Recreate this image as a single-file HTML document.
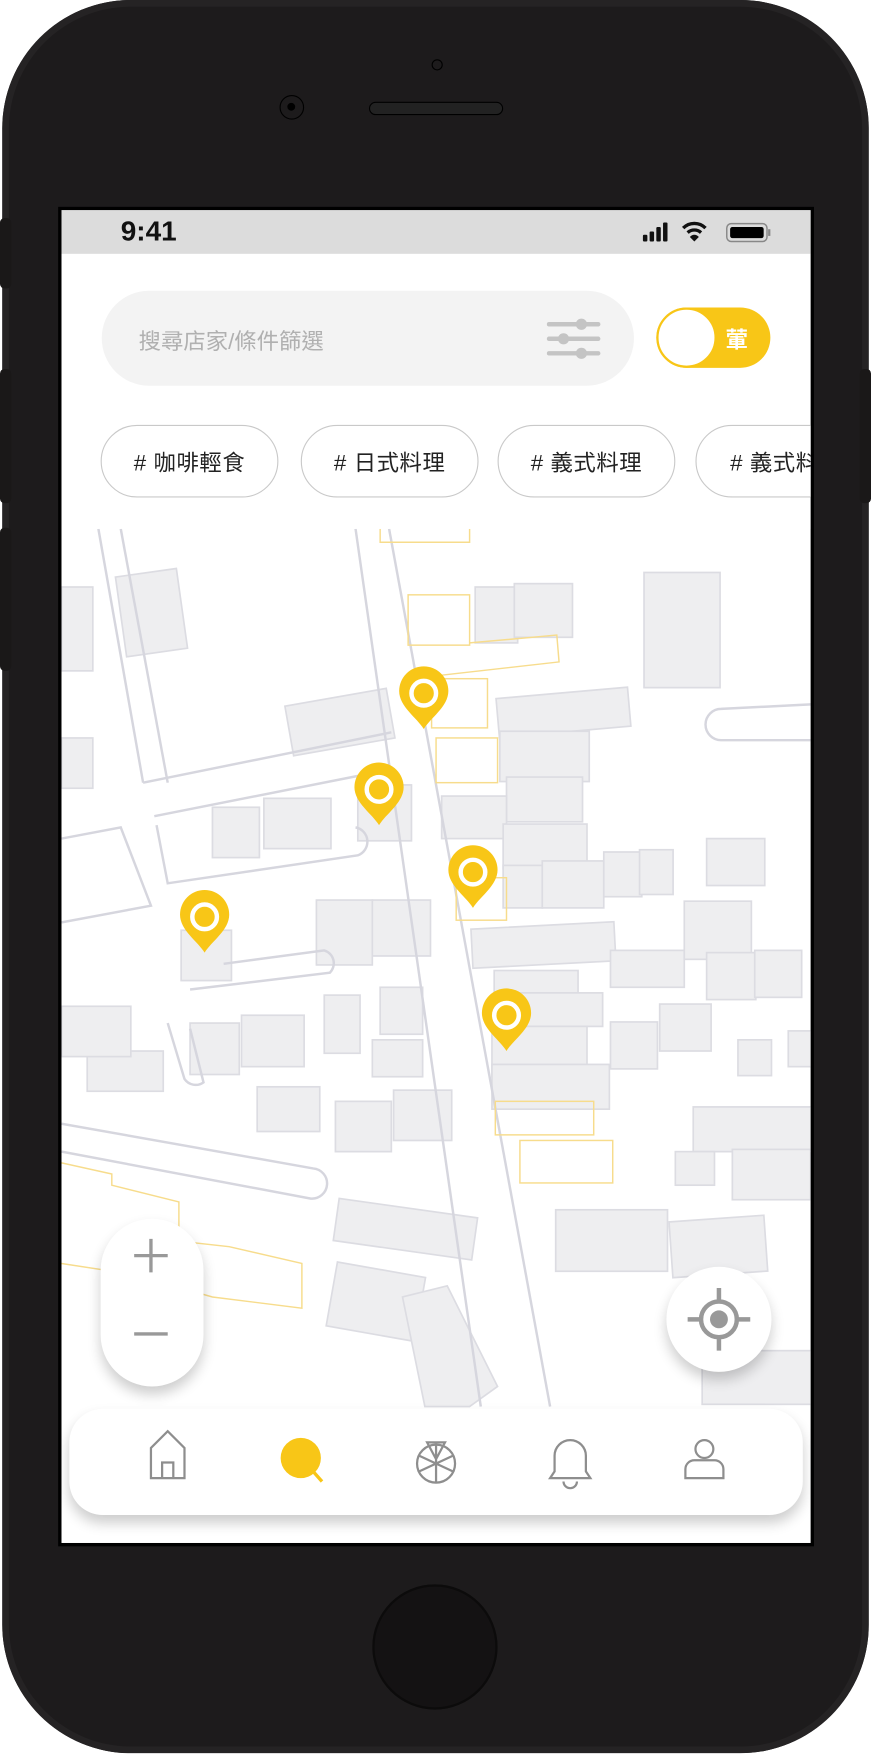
<!DOCTYPE html>
<html><head><meta charset="utf-8"><style>
html,body{margin:0;padding:0;width:871px;height:1754px;overflow:hidden;background:#fff}
#w{position:absolute;left:0;top:0;width:779px;height:1568px;transform:scale(1.1181);transform-origin:0 0;font-family:"Liberation Sans","Noto Sans CJK TC",sans-serif}
.abs{position:absolute}
.phone{left:2px;top:0;width:775px;height:1568px;border-radius:115px;background:#1d1b1c;box-shadow:inset 0 0 0 6px #252324}
.btn{background:#1a1818;border-radius:4px}
.screen{left:52px;top:185px;width:676px;height:1198px;background:#000}
.inner{left:55px;top:188px;width:670px;height:1192px;background:#fff;overflow:hidden}
.status{left:0;top:0;width:670px;height:39px;background:#dcdcdc}
.search{left:36px;top:72px;width:476px;height:85px;border-radius:43px;background:#f3f3f3}
.chip{top:192px;height:65px;width:159px;border:1.5px solid #c9c9c9;border-radius:33px;box-sizing:border-box;font-size:20px;color:#222;display:flex;align-items:center;justify-content:center;background:#fff;letter-spacing:0.5px}
.card{background:#fff;box-shadow:0 7px 12px rgba(0,0,0,.2)}
</style></head><body><div id="w">
<div class="abs phone"></div>
<div class="abs btn" style="left:0;top:195px;width:10px;height:63px"></div>
<div class="abs btn" style="left:0;top:330px;width:10px;height:120px"></div>
<div class="abs btn" style="left:0;top:472px;width:10px;height:128px"></div>
<div class="abs btn" style="left:769px;top:330px;width:10px;height:120px"></div>
<div class="abs" style="left:386px;top:53px;width:8px;height:8px;border-radius:50%;border:1px solid #000"></div>
<div class="abs" style="left:250px;top:85px;width:22px;height:22px;border-radius:50%;border:1.5px solid #000;box-sizing:border-box"><div style="position:absolute;left:6px;top:6px;width:7px;height:7px;border-radius:50%;background:#000"></div></div>
<div class="abs" style="left:330px;top:91px;width:120px;height:12px;border-radius:7px;border:1.5px solid #000;background:#222;box-sizing:border-box"></div>
<div class="abs" style="left:333px;top:1417px;width:112px;height:112px;border-radius:50%;background:#141213;box-shadow:inset 0 0 0 2px #0c0b0b"></div>
<div class="abs screen"></div>
<div class="abs inner">
<svg class="abs" style="left:0;top:0" width="670" height="1192" viewBox="55 188 670 1192">
<g fill="#eeeef0" stroke="#dcdce2" stroke-width="1.5">
<rect x="108" y="512" width="55" height="72" transform="rotate(-8 135 548)"/>
<rect x="258" y="624" width="92" height="45" transform="rotate(-10 300 646)"/>
<rect x="425" y="525" width="38" height="50"/><rect x="460" y="522" width="52" height="48"/>
<rect x="576" y="512" width="68" height="103"/>
<rect x="445" y="620" width="118" height="35" transform="rotate(-5 500 638)"/>
<rect x="447" y="654" width="80" height="45"/><rect x="453" y="695" width="68" height="40"/>
<rect x="395" y="712" width="58" height="38"/>
<rect x="190" y="722" width="42" height="45"/><rect x="236" y="714" width="60" height="45"/><rect x="320" y="702" width="48" height="50"/>
<rect x="450" y="737" width="75" height="40"/><rect x="450" y="774" width="35" height="38"/><rect x="485" y="770" width="55" height="42"/><rect x="540" y="762" width="34" height="40"/><rect x="572" y="760" width="30" height="40"/>
<rect x="632" y="750" width="52" height="42"/>
<rect x="283" y="805" width="50" height="58"/><rect x="333" y="805" width="52" height="50"/><rect x="162" y="832" width="45" height="45"/>
<rect x="422" y="828" width="128" height="35" transform="rotate(-3 480 845)"/>
<rect x="546" y="850" width="66" height="33"/><rect x="612" y="806" width="60" height="52"/><rect x="632" y="852" width="44" height="42"/><rect x="675" y="850" width="42" height="42"/>
<rect x="290" y="890" width="32" height="52"/><rect x="340" y="883" width="38" height="42"/><rect x="333" y="930" width="45" height="33"/>
<rect x="170" y="915" width="44" height="46"/><rect x="216" y="908" width="56" height="46"/><rect x="78" y="940" width="68" height="36"/>
<rect x="442" y="868" width="75" height="30"/><rect x="444" y="888" width="95" height="30"/>
<rect x="440" y="918" width="85" height="45"/><rect x="440" y="952" width="105" height="40"/>
<rect x="546" y="914" width="42" height="42"/><rect x="590" y="898" width="46" height="42"/><rect x="660" y="930" width="30" height="32"/><rect x="705" y="922" width="25" height="32"/>
<rect x="230" y="972" width="56" height="40"/><rect x="300" y="985" width="50" height="45"/><rect x="352" y="975" width="52" height="45"/>
<rect x="620" y="990" width="110" height="40"/><rect x="604" y="1030" width="35" height="30"/><rect x="655" y="1028" width="70" height="45"/>
<rect x="300" y="1080" width="125" height="38" transform="rotate(8 360 1100)"/>
<rect x="497" y="1082" width="100" height="55"/><rect x="600" y="1090" width="85" height="50" transform="rotate(-4 640 1115)"/>
<rect x="296" y="1135" width="80" height="58" transform="rotate(10 335 1165)"/>
<path d="M360 1160 L400 1150 L445 1240 L420 1258 L380 1258 Z"/>
<rect x="628" y="1208" width="100" height="48"/>
<rect x="55" y="525" width="28" height="75"/><rect x="55" y="660" width="28" height="45"/><rect x="55" y="900" width="62" height="45"/>
</g>
<g fill="none" stroke="#d6d6de" stroke-width="2.2">
<path d="M318 473 L430 1258"/><path d="M348 473 L492 1258"/>
<path d="M88 473 L128 700"/><path d="M108 473 L150 700"/>
<path d="M128 700 L350 655"/><path d="M138 730 L340 690"/>
<path d="M140 738 L150 790 L320 765 A13 13 0 0 0 318 740"/>
<path d="M55 750 L108 740 L135 810 L55 825"/>
<path d="M170 885 L295 870 A12 12 0 0 0 290 850 L200 862"/>
<path d="M150 915 L165 965 A12 12 0 0 0 182 968 L170 920"/>
<path d="M55 1005 L280 1045 A12 12 0 0 1 278 1072 L55 1030"/>
<path d="M725 630 L645 634 A14 14 0 0 0 645 662 L725 662"/>
</g>
<g fill="none" stroke="#f7dc8c" stroke-width="1.3">
<path d="M340 473 L340 485 L420 485 L420 473"/>
<rect x="365" y="532" width="55" height="45"/><path d="M420 575 L498 568 L500 592 L385 605"/>
<rect x="386" y="607" width="50" height="44"/><rect x="390" y="660" width="55" height="40"/><rect x="408" y="785" width="45" height="38"/>
<rect x="443" y="985" width="88" height="30"/><rect x="465" y="1020" width="83" height="38"/>
<path d="M55 1040 L100 1050 L100 1060 L160 1075 L160 1110 L205 1115 L270 1130 L270 1170 L190 1160 L120 1140 L55 1130"/>
</g>
<g fill="#f8c617">
<g transform="translate(379 620)"><path d="M0 32 C-6 22 -22 12 -22 -2 A22 22 0 0 1 22 -2 C22 12 6 22 0 32 Z"/><circle r="11" fill="none" stroke="#fff" stroke-width="4"/></g>
<g transform="translate(339 706)"><path d="M0 32 C-6 22 -22 12 -22 -2 A22 22 0 0 1 22 -2 C22 12 6 22 0 32 Z"/><circle r="11" fill="none" stroke="#fff" stroke-width="4"/></g>
<g transform="translate(423 780)"><path d="M0 32 C-6 22 -22 12 -22 -2 A22 22 0 0 1 22 -2 C22 12 6 22 0 32 Z"/><circle r="11" fill="none" stroke="#fff" stroke-width="4"/></g>
<g transform="translate(183 820)"><path d="M0 32 C-6 22 -22 12 -22 -2 A22 22 0 0 1 22 -2 C22 12 6 22 0 32 Z"/><circle r="11" fill="none" stroke="#fff" stroke-width="4"/></g>
<g transform="translate(453 908)"><path d="M0 32 C-6 22 -22 12 -22 -2 A22 22 0 0 1 22 -2 C22 12 6 22 0 32 Z"/><circle r="11" fill="none" stroke="#fff" stroke-width="4"/></g>
</g>
</svg>
<div class="abs" style="left:0;top:0;width:670px;height:285px;background:#fff"></div>
<div class="abs status"></div>
<div class="abs" style="left:53px;top:5px;font-size:25px;font-weight:bold;color:#111">9:41</div>
<svg class="abs" style="left:518px;top:10px" width="125" height="22" viewBox="0 0 125 22">
<rect x="2" y="12" width="4" height="6" rx="1" fill="#111"/><rect x="8" y="9" width="4" height="9" rx="1" fill="#111"/><rect x="14" y="5" width="4" height="13" rx="1" fill="#111"/><rect x="20" y="1" width="4" height="17" rx="1" fill="#111"/>
<path d="M38 6 A14 14 0 0 1 58 6" stroke="#111" stroke-width="3" fill="none"/><path d="M42 10 A9 9 0 0 1 54 10" stroke="#111" stroke-width="3" fill="none"/><path d="M44 14 L48 18 L52 14 A5 5 0 0 0 44 14Z" fill="#111"/>
<rect x="77" y="2" width="36" height="16" rx="4" fill="none" stroke="#888" stroke-width="1.3"/><rect x="80" y="5" width="30" height="10" rx="2" fill="#000"/><rect x="114" y="7" width="2" height="6" fill="#888"/>
</svg>
<div class="abs search"><div class="abs" style="left:33px;top:29px;font-size:20px;color:#b0b0b0">搜尋店家/條件篩選</div>
<svg class="abs" style="left:398px;top:22px" width="50" height="42" viewBox="0 0 50 42"><g stroke="#c4c4c4" stroke-width="4" stroke-linecap="round"><line x1="2" y1="8" x2="46" y2="8"/><line x1="2" y1="21" x2="46" y2="21"/><line x1="2" y1="34" x2="46" y2="34"/></g><g fill="#c4c4c4"><circle cx="31" cy="8" r="5"/><circle cx="15" cy="21" r="5"/><circle cx="31" cy="34" r="5"/></g></svg></div>
<div class="abs" style="left:532px;top:87px;width:102px;height:54px;border-radius:27px;background:#f8c617"></div>
<div class="abs" style="left:532px;top:87px;width:54px;height:54px;border-radius:50%;background:#fff;border:2px solid #f8c617;box-sizing:border-box"></div>
<div class="abs" style="left:594px;top:100px;font-size:20px;font-weight:bold;color:#fff">葷</div>
<div class="abs chip" style="left:35px"># 咖啡輕食</div>
<div class="abs chip" style="left:214px"># 日式料理</div>
<div class="abs chip" style="left:390px"># 義式料理</div>
<div class="abs chip" style="left:567px;justify-content:flex-start;padding-left:30px"># 義式料理</div>
<div class="abs card" style="left:35px;top:902px;width:92px;height:150px;border-radius:46px"></div>
<svg class="abs" style="left:60px;top:915px" width="40" height="120"><g stroke="#999" stroke-width="3"><line x1="20" y1="5" x2="20" y2="35"/><line x1="5" y1="20" x2="35" y2="20"/><line x1="5" y1="90" x2="35" y2="90"/></g></svg>
<div class="abs card" style="left:541px;top:945px;width:94px;height:94px;border-radius:50%"></div>
<svg class="abs" style="left:558px;top:962px" width="60" height="60" viewBox="0 0 60 60"><circle cx="30" cy="30" r="16" fill="none" stroke="#999" stroke-width="4"/><circle cx="30" cy="30" r="8" fill="#999"/><g stroke="#999" stroke-width="4"><line x1="30" y1="2" x2="30" y2="14"/><line x1="30" y1="46" x2="30" y2="58"/><line x1="2" y1="30" x2="14" y2="30"/><line x1="46" y1="30" x2="58" y2="30"/></g></svg>
<div class="abs card" style="left:7px;top:1072px;width:656px;height:95px;border-radius:30px"></div>
<svg class="abs" style="left:7px;top:1072px" width="656" height="95" viewBox="62 1260 656 95" fill="none" stroke="#8e8e8e" stroke-width="2">
<path d="M135 1322 L135 1295 L150 1280 L165 1295 L165 1322 Z M145 1322 L145 1308 L155 1308 L155 1322"/>
<circle cx="269" cy="1304" r="18" fill="#f8c617" stroke="none"/><line x1="280" y1="1316" x2="288" y2="1325" stroke="#f8c617" stroke-width="3"/>
<circle cx="390" cy="1309" r="17"/><path d="M382 1290 L398 1290 L390 1305 Z M390 1292 L390 1326 M375 1302 L405 1316 M375 1316 L405 1302"/>
<path d="M492 1322 L528 1322 L524 1316 L524 1302 A14 14 0 0 0 496 1302 L496 1316 Z M504 1325 A6 6 0 0 0 516 1325"/>
<circle cx="630" cy="1296" r="8"/><path d="M613 1322 L613 1314 A8 8 0 0 1 621 1306 L639 1306 A8 8 0 0 1 647 1314 L647 1322 Z"/>
</svg>
</div>
</div></body></html>
